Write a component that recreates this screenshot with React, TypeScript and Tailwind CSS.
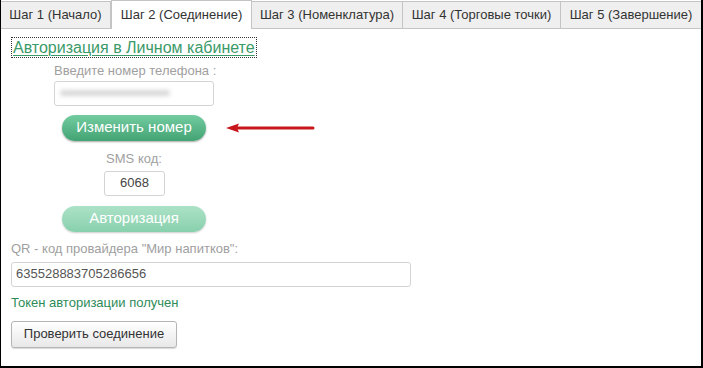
import React from "react";

const tabs = [
  { t: "Шаг 1 (Начало)", w: "w-[110px]" },
  { t: "Шаг 2 (Соединение)", w: "w-[141px]" },
  { t: "Шаг 3 (Номенклатура)", w: "w-[151px]" },
  { t: "Шаг 4 (Торговые точки)", w: "w-[158px]" },
  { t: "Шаг 5 (Завершение)", w: "flex-1" },
];

const Arrow = () => (
  <svg width="90" height="10" viewBox="0 0 90 10">
    <path d="M12 5 H88" stroke="#c8161d" strokeWidth="3" strokeLinecap="round" />
    <path d="M1 5 L14 0.5 L12 5 L14 9.5 Z" fill="#c8161d" />
  </svg>
);

export default function App() {
  return (
    <div
      className="h-[368px] w-[703px] overflow-hidden whitespace-nowrap border-b-2 border-l border-r-2 border-black bg-white text-[13px] text-[#333]"
      style={{ fontFamily: "Arial, 'Liberation Sans', sans-serif" }}
    >
      <div className="flex h-[29px] items-end border-b border-[#c4c4c4] bg-white">
        {tabs.map((tab, i) =>
          i === 1 ? (
            <div
              key={tab.t}
              className={`-mb-px flex h-[29px] shrink-0 items-center justify-center border-x border-t border-[#c4c4c4] bg-white ${tab.w}`}
            >
              {tab.t}
            </div>
          ) : (
            <div
              key={tab.t}
              className={`flex h-[27px] shrink-0 items-center justify-center border-r border-t border-[#c4c4c4] bg-[#efefef] last:border-r-0 ${tab.w}`}
            >
              {tab.t}
            </div>
          )
        )}
      </div>

      <div className="px-[10px] pt-[8px]">
        <div className="inline-block border border-dotted border-[#333] px-px text-[16px] leading-[19px] text-[#3a9a68] underline decoration-1 underline-offset-2">
          Авторизация в Личном кабинете
        </div>

        <div className="pl-[43px] pt-[4px] text-[#a0a0a0]">
          <div className="w-[160px] text-center leading-[16px]">Введите номер телефона :</div>
          <div className="mt-[2px] flex h-[25px] w-[160px] items-center rounded-[3px] border border-[#d4d4d4] px-[5px]">
            <div className="h-[6px] w-[110px] rounded-full bg-[#d8d8d8] blur-[2px]" />
          </div>
          <div className="mt-[9px] flex items-center">
            <button className="ml-[8px] h-[26px] w-[144px] rounded-full bg-gradient-to-b from-[#72cca0] to-[#43a373] text-[15px] text-white shadow-[0_1px_2px_rgba(0,0,0,0.35)]">
              Изменить номер
            </button>
            <div className="ml-[19px] flex">
              <Arrow />
            </div>
          </div>
          <div className="mt-[10px] w-[160px] text-center leading-[16px]">SMS код:</div>
          <div className="ml-[50px] mt-[4px] flex h-[25px] w-[61px] items-center justify-center rounded-[3px] border border-[#d4d4d4] text-[#444]">
            6068
          </div>
          <button className="ml-[8px] mt-[10px] h-[26px] w-[144px] rounded-full bg-gradient-to-b from-[#ace2c7] to-[#88d0ad] text-[15px] text-white shadow-[0_1px_2px_rgba(0,0,0,0.2)]">
            Авторизация
          </button>
        </div>

        <div className="mt-[9px] leading-[16px] text-[#a0a0a0]">QR - код провайдера "Мир напитков":</div>
        <div className="mt-[5px] flex h-[25px] w-[400px] items-center rounded-[3px] border border-[#d4d4d4] px-[4px] text-[#555]">
          635528883705286656
        </div>
        <div className="mt-[8px] leading-[16px] text-[#2e8b57]">Токен авторизации получен</div>
        <button className="mt-[10px] h-[27px] w-[166px] rounded-[3px] border border-[#b5b5b5] bg-gradient-to-b from-white to-[#e8e8e8] text-[13px] text-[#333] shadow-[0_1px_1px_rgba(0,0,0,0.15)]">
          Проверить соединение
        </button>
      </div>
    </div>
  );
}
